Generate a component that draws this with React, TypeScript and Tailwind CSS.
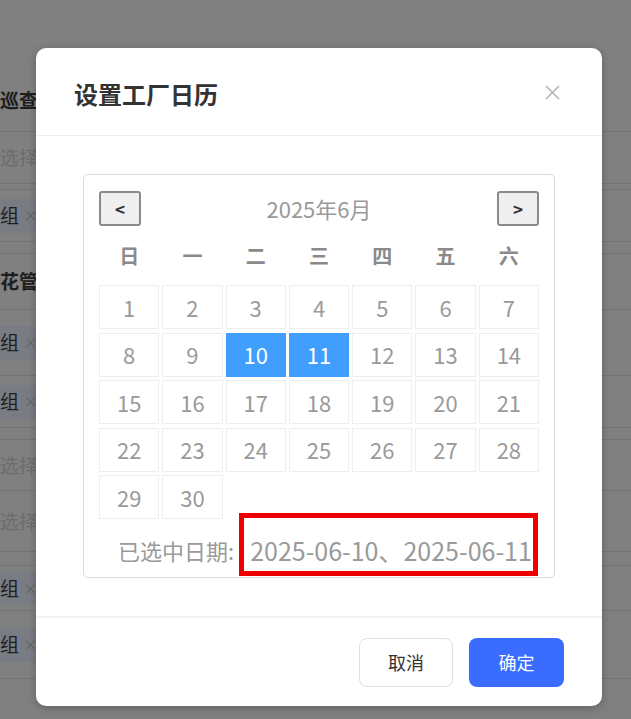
import React from "react";

const FONT = { fontFamily: '"Noto Sans CJK SC", "Noto Sans", sans-serif' };

type BgRow = { h: number; kind?: "label" | "ph" | "tag"; text?: string };

const bgRows: BgRow[] = [
  { h: 62, kind: "label", text: "巡查" },
  { h: 52, kind: "ph", text: "选择" },
  { h: 6 },
  { h: 52, kind: "tag", text: "组" },
  { h: 12 },
  { h: 56, kind: "label", text: "花管" },
  { h: 66, kind: "tag", text: "组" },
  { h: 52, kind: "tag", text: "组" },
  { h: 12 },
  { h: 51, kind: "ph", text: "选择" },
  { h: 61, kind: "ph", text: "选择" },
  { h: 14 },
  { h: 45, kind: "tag", text: "组" },
  { h: 68, kind: "tag", text: "组" },
];

function Background() {
  return (
    <div className="flex flex-col">
      <div className="h-[70px]" />
      {bgRows.map((r, i) => (
        <div
          key={i}
          className="flex items-center border-b border-[#747474]"
          style={{ height: r.h }}
        >
          {r.kind === "label" && (
            <span className="text-[19px] font-semibold text-[#1e1e1e]">{r.text}</span>
          )}
          {r.kind === "ph" && <span className="text-[19px] text-[#6c6c6c]">{r.text}</span>}
          {r.kind === "tag" && (
            <span className="flex h-[34px] w-[60px] items-center bg-[#797c83]">
              <span className="text-[19px] text-[#1e1e1e]">{r.text}</span>
              <span className="ml-[4px] text-[15px] text-[#666]">×</span>
            </span>
          )}
        </div>
      ))}
    </div>
  );
}

const weekdays = ["日", "一", "二", "三", "四", "五", "六"];
const days = Array.from({ length: 30 }, (_, i) => i + 1);
const selected = new Set([10, 11]);

function NavButton({ children }: { children: React.ReactNode }) {
  return (
    <button className="flex h-[35px] w-[42px] items-center justify-center rounded-[3px] border-2 border-[#8a8a8a] bg-[#efefef] text-[17px] font-bold text-[#333]">
      {children}
    </button>
  );
}

function Calendar() {
  return (
    <div className="w-[472px] rounded-[5px] border border-[#dcdcdc] px-[15px] pt-[16px] pb-[11px]">
      <div className="flex h-[35px] items-center justify-between">
        <NavButton>&lt;</NavButton>
        <span className="text-[22px] text-[#9a9a9a]">2025年6月</span>
        <NavButton>&gt;</NavButton>
      </div>
      <div className="grid h-[59px] grid-cols-7 items-center gap-x-[3px]">
        {weekdays.map((w) => (
          <div key={w} className="text-center text-[20px] font-bold text-[#8a8a8a]">
            {w}
          </div>
        ))}
      </div>
      <div className="grid grid-cols-7 gap-x-[3px] gap-y-[3.5px]">
        {days.map((d) =>
          selected.has(d) ? (
            <div
              key={d}
              className="flex h-[44px] items-center justify-center bg-[#409eff] text-[22px] text-white"
            >
              {d}
            </div>
          ) : (
            <div
              key={d}
              className="flex h-[44px] items-center justify-center border border-[#eeeeee] text-[22px] text-[#9a9a9a]"
            >
              {d}
            </div>
          )
        )}
      </div>
      <div className="mt-[15px] flex h-[32px] items-center">
        <span className="ml-[19px] text-[22px] text-[#9a9a9a]">已选中日期:</span>
        <span className="relative ml-[16px] text-[25px] leading-[32px] text-[#9a9a9a]">
          2025-06-10、2025-06-11
          <span className="pointer-events-none absolute -top-[21px] -bottom-[10px] -left-[11px] -right-[6px] border-[5px] border-[#ee0000]" />
        </span>
      </div>
    </div>
  );
}

export default function App() {
  return (
    <div className="relative h-[719px] w-[631px] overflow-hidden bg-[#808080]" style={FONT}>
      <Background />
      <div className="absolute left-[36px] top-[48px] flex w-[566px] flex-col rounded-[10px] bg-white shadow-[0_2px_8px_rgba(0,0,0,0.25)]">
        <div className="flex h-[88px] items-center justify-between border-b border-[#eeeeee] pl-[38px] pr-[42px] pt-[5px]">
          <span className="text-[24px] font-semibold text-[#333]">设置工厂日历</span>
          <svg width="15" height="15" viewBox="0 0 15 15" className="mt-[-3px]">
            <path d="M1 1 L14 14 M14 1 L1 14" stroke="#b4b4b4" strokeWidth="1.6" />
          </svg>
        </div>
        <div className="px-[47px] pt-[38px] pb-[38px]">
          <Calendar />
        </div>
        <div className="flex h-[90px] items-center justify-end gap-[16px] border-t-2 border-[#f4f4f4] pr-[38px]">
          <button className="h-[49px] w-[94px] rounded-[8px] border border-[#dcdfe6] bg-white text-[18px] text-[#333]">
            取消
          </button>
          <button className="h-[49px] w-[95px] rounded-[8px] bg-[#3a6cff] text-[18px] text-white">
            确定
          </button>
        </div>
      </div>
    </div>
  );
}
